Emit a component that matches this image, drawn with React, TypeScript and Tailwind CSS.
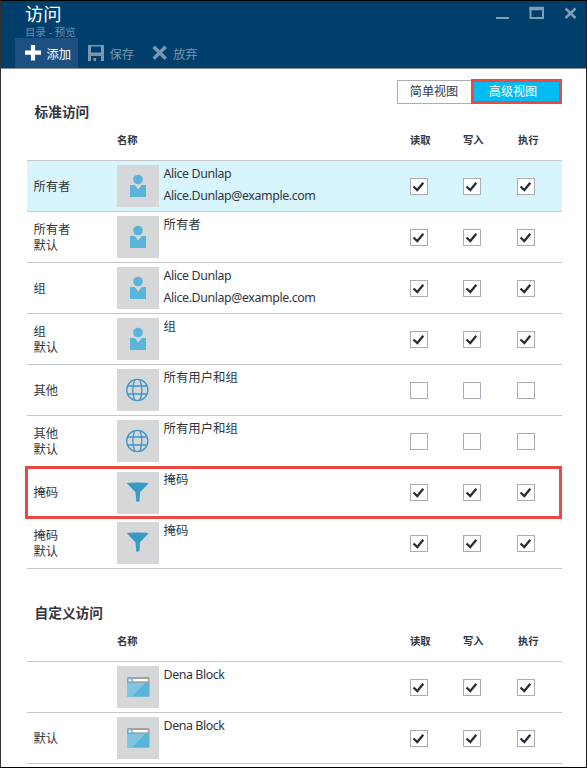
import React from "react";

type Kind = "user" | "globe" | "filter" | "app";

interface Row {
  label: string[];
  kind: Kind;
  name: string[];
  checked: boolean;
  state?: "selected" | "marked";
}

const alice = ["Alice Dunlap", "Alice.Dunlap@example.com"];

const standardRows: Row[] = [
  { label: ["所有者"], kind: "user", name: alice, checked: true, state: "selected" },
  { label: ["所有者", "默认"], kind: "user", name: ["所有者"], checked: true },
  { label: ["组"], kind: "user", name: alice, checked: true },
  { label: ["组", "默认"], kind: "user", name: ["组"], checked: true },
  { label: ["其他"], kind: "globe", name: ["所有用户和组"], checked: false },
  { label: ["其他", "默认"], kind: "globe", name: ["所有用户和组"], checked: false },
  { label: ["掩码"], kind: "filter", name: ["掩码"], checked: true, state: "marked" },
  { label: ["掩码", "默认"], kind: "filter", name: ["掩码"], checked: true },
];

const customRows: Row[] = [
  { label: [], kind: "app", name: ["Dena Block"], checked: true },
  { label: ["默认"], kind: "app", name: ["Dena Block"], checked: true },
];

function KindIcon({ kind }: { kind: Kind }) {
  return (
    <svg width="42" height="42" viewBox="0 0 42 42" className="block shrink-0 bg-[#d5d7d9]">
      {kind === "user" && (
        <g fill="#59b4d9">
          <circle cx="21" cy="14.5" r="4.8" />
          <path d="M13 20h4.6l3.6 4.6 3.6-4.6H29v12H13z" />
        </g>
      )}
      {kind === "globe" && (
        <g fill="none" stroke="#3999c6" strokeWidth="1.3">
          <circle cx="20.300" cy="21" r="10.6" />
          <path d="M17.800 10.800c-2.700 6-2.700 14.400 0 20.400M22.800 10.800c2.700 6 2.700 14.400 0 20.400M11 17h18.600M11 25h18.600" />
        </g>
      )}
      {kind === "filter" && (
        <g fill="#3999c6">
          <path d="M9.700 11.300h22l-8.700 8.900-.5 9-3.200.6-.8-9.600z" />
          <ellipse cx="20.700" cy="11.300" rx="10.900" ry="0.900" />
        </g>
      )}
      {kind === "app" && (
        <g>
          <path d="M10 16h22.500v13.500a1.200 1.200 0 0 1-1.200 1.200H11.200A1.200 1.200 0 0 1 10 29.500z" fill="#59b4d9" />
          <path d="M10 16h19L15 30.700h-3.800A1.200 1.200 0 0 1 10 29.500z" fill="#7fc5e2" />
          <path d="M11.200 11h20.100a1.200 1.200 0 0 1 1.200 1.200V17H10v-4.800A1.200 1.200 0 0 1 11.200 11z" fill="#a0a1a2" />
          <path d="M15.500 13h15.300v2.300H15.500z" fill="#fff" />
          <circle cx="12.900" cy="14.200" r="2.500" fill="#59b4d9" />
          <path d="M12.900 12.500v3.400M11.200 14.200h3.400" stroke="#fff" strokeWidth="1" />
        </g>
      )}
    </svg>
  );
}

function Check({ on }: { on: boolean }) {
  return (
    <span className="mt-[17px] flex h-[17px] w-[17.500px] items-center justify-center border border-[#adacb5] bg-white">
      {on && (
        <svg width="13" height="13" viewBox="0 0 13 13">
          <path d="M1.500 6.500 5.300 10 11.300 2.800" fill="none" stroke="#292e36" strokeWidth="2.300" />
        </svg>
      )}
    </span>
  );
}

function TableHead() {
  return (
    <div className="grid h-5 grid-cols-[90px_293px_53px_54px_45px] text-[10.300px] leading-5 font-bold">
      <span />
      <span>名称</span>
      <span>读取</span>
      <span>写入</span>
      <span className="pl-px">执行</span>
    </div>
  );
}

function AccessRow({ row }: { row: Row }) {
  return (
    <div
      className={
        "relative grid h-[51px] grid-cols-[90px_293px_53px_54px_45px] border-b border-[#c7c8ca] " +
        (row.state === "selected" ? "bg-[#d8f5fd]" : "")
      }
    >
      <div className="flex flex-col justify-center pt-px pl-[6.500px] text-[12.300px] leading-4">
        {row.label.map((t) => (
          <span key={t}>{t}</span>
        ))}
      </div>
      <div className={"flex gap-[4.500px] " + (row.state === "marked" ? "pt-[5px]" : "pt-1")}>
        <KindIcon kind={row.kind} />
        <div
          className={
            "flex flex-col text-[12.400px] leading-[22px] whitespace-nowrap " +
            (row.state === "marked" ? "-mt-[3px]" : "-mt-[2px]")
          }
        >
          {row.name.map((t) => (
            <span key={t} className={/[a-z]/.test(t) ? "tracking-[-0.410px]" : ""}>
              {t}
            </span>
          ))}
        </div>
      </div>
      <Check on={row.checked} />
      <Check on={row.checked} />
      <Check on={row.checked} />
      {row.state === "marked" && (
        <div className="absolute -top-px -left-[2px] h-[53px] w-[537px] border-[3px] border-[#ea4a43]" />
      )}
    </div>
  );
}

function AccessTable({ rows }: { rows: Row[] }) {
  return (
    <div className="border-t border-[#c7c8ca]">
      {rows.map((row, i) => (
        <AccessRow key={i} row={row} />
      ))}
    </div>
  );
}

export default function App() {
  return (
    <div className="flex h-[768px] w-[587px] flex-col overflow-hidden border-t border-r border-b border-l border-t-black border-r-[#202020] border-b-black border-l-[#333] bg-white font-['Noto_Sans','Noto_Sans_CJK_SC',sans-serif] text-[#31363e]">
      <header className="flex h-[68px] shrink-0 flex-col border-b border-[#8a9298] bg-[#003e6c]">
        <div className="flex h-[37px] justify-between">
          <div className="pl-6">
            <h1 className="h-[25px] text-[18.300px] leading-[26px] text-white">访问</h1>
            <p className="text-[10.500px] leading-3 text-[#6b90ac]">目录 - 预览</p>
          </div>
          <svg width="90" height="30" viewBox="496 1 90 30" fill="none" stroke="#7f9eb5">
            <path d="M496 18h13" strokeWidth="2" />
            <path d="M530.500 8.500h12.500v9.500h-12.500z" strokeWidth="2" />
            <path d="M529.500 8.500h14.500" strokeWidth="3.500" />
            <path d="m565.500 8.500 10 9.500m0-9.500-10 9.500" strokeWidth="2.500" />
          </svg>
        </div>
        <nav className="flex h-[30px] pl-[14px] text-[12.300px] leading-[33px]">
          <div className="flex w-[63px] bg-[#1b5080] pl-[10px] text-white">
            <svg width="16" height="16" viewBox="0 0 16 16" className="mt-[7px] mr-[5.500px]">
              <path d="M8 0v15.500M0 7.700h16" stroke="#fff" strokeWidth="4.200" />
            </svg>
            添加
          </div>
          <div className="flex w-[64px] pl-[10px] text-[#7898b0]">
            <svg width="16" height="16" viewBox="0 0 16 16" className="mt-[7px] mr-[5.500px]" fill="#7898b0">
              <path fillRule="evenodd" d="M0 0h16v16H0zM3 1.500v6h10v-6zM3 11v5h10v-5z" />
              <path d="M5.500 13h2.500v3H5.500z" />
            </svg>
            保存
          </div>
          <div className="flex pl-[10px] text-[#7898b0]">
            <svg width="16" height="16" viewBox="0 0 16 16" className="mt-[7px] mr-[5px]">
              <path d="m1.700 1.700 12 12m0-12-12 12" stroke="#7898b0" strokeWidth="3.400" />
            </svg>
            放弃
          </div>
        </nav>
      </header>
      <main className="pr-[24px] pl-[26px]">
        <div className="mt-[10px] flex h-[25px] items-center justify-end text-[12.100px]">
          <button className="h-[24px] w-[74px] border border-r-0 border-[#adacb5] pr-px leading-[22px]">简单视图</button>
          <button className="h-[25px] w-[91px] border-[3px] border-[#ea4a43] bg-[#00bcf2] pr-[7px] leading-[19px] text-white">
            高级视图
          </button>
        </div>
        <h2 className="mt-[-2px] pl-[7.500px] text-[13.700px] leading-5 font-bold">标准访问</h2>
        <div className="mt-2">
          <TableHead />
        </div>
        <div className="mt-[10px]">
          <AccessTable rows={standardRows} />
        </div>
        <h2 className="mt-[34px] pl-[7.500px] text-[13.700px] leading-5 font-bold">自定义访问</h2>
        <div className="mt-2">
          <TableHead />
        </div>
        <div className="mt-[10px]">
          <AccessTable rows={customRows} />
        </div>
      </main>
    </div>
  );
}
